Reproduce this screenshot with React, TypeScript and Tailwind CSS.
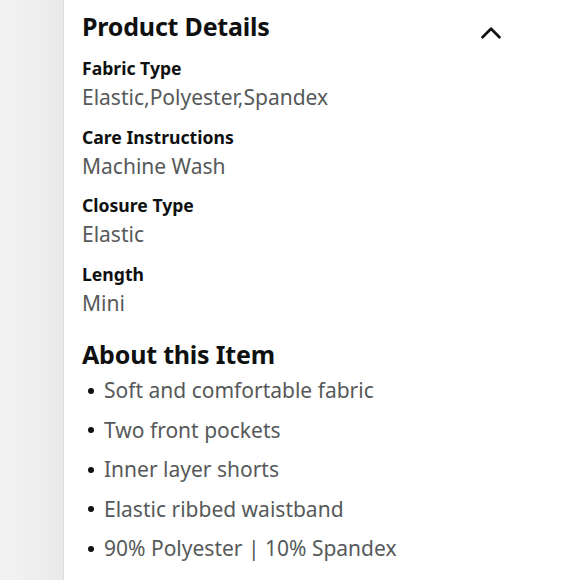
import { ChevronUp } from "lucide-react";

const DETAILS = [
  { label: "Fabric Type", value: "Elastic,Polyester,Spandex" },
  { label: "Care Instructions", value: "Machine Wash" },
  { label: "Closure Type", value: "Elastic" },
  { label: "Length", value: "Mini" },
];

const BULLETS = [
  "Soft and comfortable fabric",
  "Two front pockets",
  "Inner layer shorts",
  "Elastic ribbed waistband",
  "90% Polyester | 10% Spandex",
];

export default function App() {
  return (
    <main
      className="w-[580px] h-[580px] overflow-hidden bg-white flex text-[#0f1111]"
      style={{ fontFamily: '"Noto Sans", "Open Sans", sans-serif' }}
    >
      {/* left gutter */}
      <aside className="w-[64px] flex-shrink-0 h-full bg-gradient-to-r from-[#f3f3f3] to-[#eaeaea] border-r border-[#dcdcdc]" />

      <section className="flex-1 pl-[18px] pr-[72px] pt-[8px]">
        <div className="flex items-center justify-between h-[40px]">
          <h2 className="text-[25px] font-bold leading-none tracking-[-0.2px] pb-[4px]">Product Details</h2>
          <ChevronUp className="w-[34px] h-[34px] mt-[10px]" strokeWidth={1.9} />
        </div>

        <div className="flex flex-col mt-[8px]">
          {DETAILS.map((d) => (
            <div key={d.label} className="h-[68.5px]">
              <div className="text-[17.6px] font-bold leading-[24px]">{d.label}</div>
              <div className="text-[21px] leading-[28px] mt-[3px] text-[#565959]">{d.value}</div>
            </div>
          ))}
        </div>

        <h2 className="text-[25px] font-bold leading-[32px] mt-[8px] tracking-[-0.2px]">About this Item</h2>
        <ul className="mt-[1px]">
          {BULLETS.map((b) => (
            <li key={b} className="flex items-center h-[39.5px] text-[21px] text-[#565959]">
              <span className="w-[6px] h-[6px] rounded-full bg-[#0f1111] ml-[6px] mr-[10px]" />
              {b}
            </li>
          ))}
        </ul>
      </section>
    </main>
  );
}
